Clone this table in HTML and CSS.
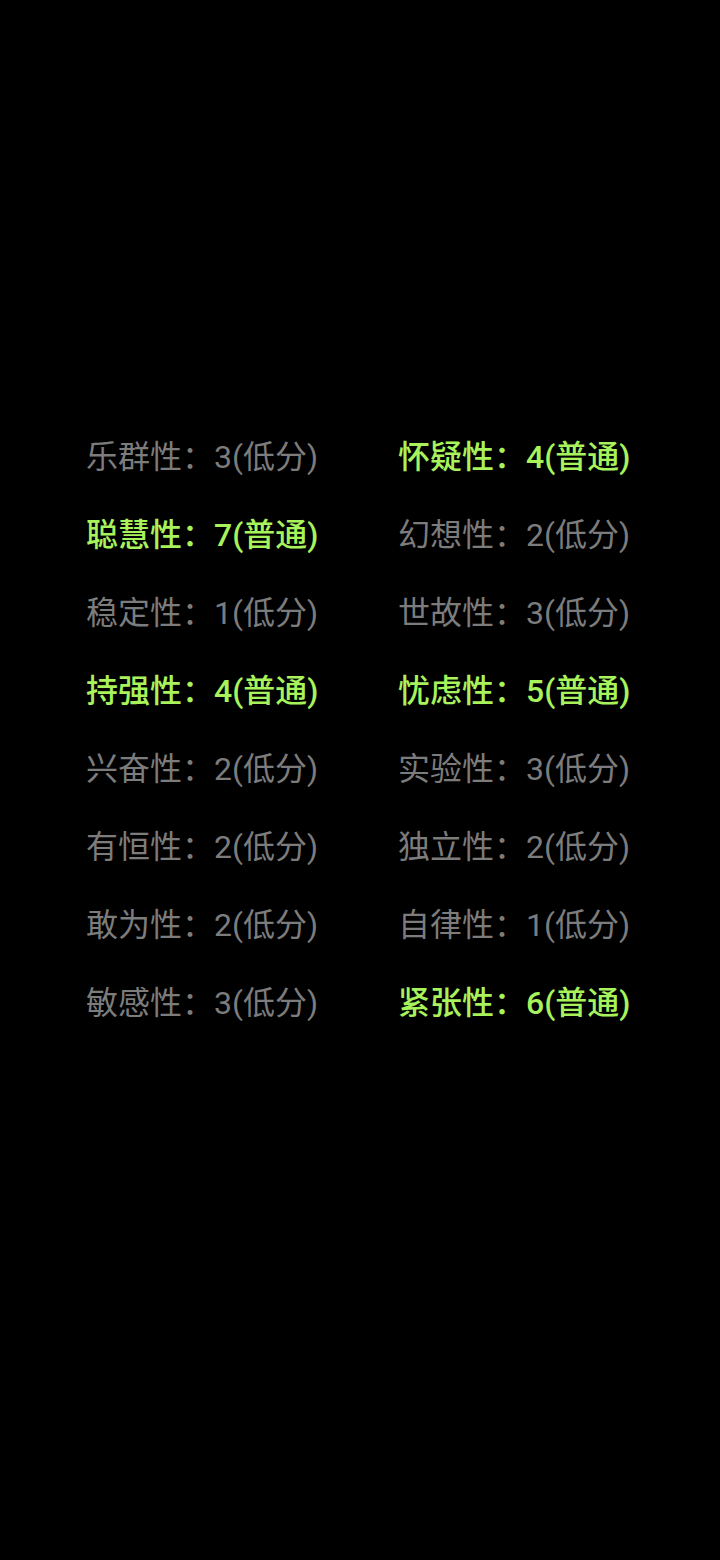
FILE: index.html
```html
<!DOCTYPE html>
<html lang="zh-CN">

<head>
    <meta charset="UTF-8">
    <meta name="viewport" content="width=device-width, initial-scale=1.0">
    <title>性格因素</title>
    <link rel="stylesheet" href="styles.css">
</head>

<body>
    <div class="result-grid">
        <div class="factor">乐群性：3(低分)</div>
        <div class="factor high">怀疑性：4(普通)</div>
        <div class="factor high">聪慧性：7(普通)</div>
        <div class="factor">幻想性：2(低分)</div>
        <div class="factor">稳定性：1(低分)</div>
        <div class="factor">世故性：3(低分)</div>
        <div class="factor high">持强性：4(普通)</div>
        <div class="factor high">忧虑性：5(普通)</div>
        <div class="factor">兴奋性：2(低分)</div>
        <div class="factor">实验性：3(低分)</div>
        <div class="factor">有恒性：2(低分)</div>
        <div class="factor">独立性：2(低分)</div>
        <div class="factor">敢为性：2(低分)</div>
        <div class="factor">自律性：1(低分)</div>
        <div class="factor">敏感性：3(低分)</div>
        <div class="factor high">紧张性：6(普通)</div>
    </div>
</body>

</html>
```

FILE: styles.css
```css
body {
    margin: 0;
    background-color: #000;
    font-family: Roboto, "Noto Sans CJK SC", sans-serif;
    min-height: 1560px;
}

.result-grid {
    display: grid;
    grid-template-columns: 312px 312px;
    padding: 418px 0 0 86px;
}

.factor {
    height: 78px;
    line-height: 78px;
    font-size: 32px;
    color: #7c7c7c;
    white-space: nowrap;
}

.factor.high {
    color: #a8f25c;
    font-weight: 500;
}
```
